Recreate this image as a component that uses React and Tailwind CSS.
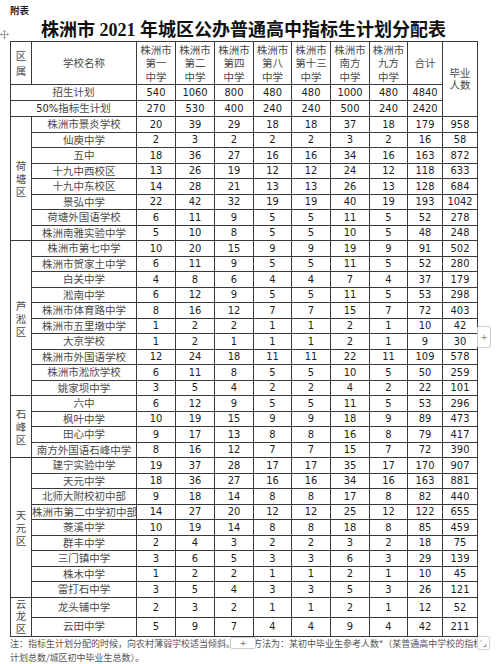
const cjk = '"Noto Sans CJK SC", sans-serif';
const num = '"DejaVu Sans Condensed", "DejaVu Sans", sans-serif';

const groups = [
  {
    name: ['荷', '塘', '区'],
    rows: [
      ['株洲市景炎学校', 20, 39, 29, 18, 18, 37, 18, 179, 958],
      ['仙庾中学', 2, 3, 2, 2, 2, 3, 2, 16, 58],
      ['五中', 18, 36, 27, 16, 16, 34, 16, 163, 872],
      ['十九中西校区', 13, 26, 19, 12, 12, 24, 12, 118, 633],
      ['十九中东校区', 14, 28, 21, 13, 13, 26, 13, 128, 684],
      ['景弘中学', 22, 42, 32, 19, 19, 40, 19, 193, 1042],
      ['荷塘外国语学校', 6, 11, 9, 5, 5, 11, 5, 52, 278],
      ['株洲南雅实验中学', 5, 10, 8, 5, 5, 10, 5, 48, 248],
    ],
  },
  {
    name: ['芦', '淞', '区'],
    rows: [
      ['株洲市第七中学', 10, 20, 15, 9, 9, 19, 9, 91, 502],
      ['株洲市贺家土中学', 6, 11, 9, 5, 5, 11, 5, 52, 280],
      ['白关中学', 4, 8, 6, 4, 4, 7, 4, 37, 179],
      ['淞南中学', 6, 12, 9, 5, 5, 11, 5, 53, 298],
      ['株洲市体育路中学', 8, 16, 12, 7, 7, 15, 7, 72, 403],
      ['株洲市五里墩中学', 1, 2, 2, 1, 1, 2, 1, 10, 42],
      ['大京学校', 1, 2, 1, 1, 1, 2, 1, 9, 30],
      ['株洲市外国语学校', 12, 24, 18, 11, 11, 22, 11, 109, 578],
      ['株洲市淞欣学校', 6, 11, 8, 5, 5, 10, 5, 50, 259],
      ['姚家坝中学', 3, 5, 4, 2, 2, 4, 2, 22, 101],
    ],
  },
  {
    name: ['石', '峰', '区'],
    rows: [
      ['六中', 6, 12, 9, 5, 5, 11, 5, 53, 296],
      ['枫叶中学', 10, 19, 15, 9, 9, 18, 9, 89, 473],
      ['田心中学', 9, 17, 13, 8, 8, 16, 8, 79, 417],
      ['南方外国语石峰中学', 8, 16, 12, 7, 7, 15, 7, 72, 390],
    ],
  },
  {
    name: ['天', '元', '区'],
    rows: [
      ['建宁实验中学', 19, 37, 28, 17, 17, 35, 17, 170, 907],
      ['天元中学', 18, 36, 27, 16, 16, 34, 16, 163, 881],
      ['北师大附校初中部', 9, 18, 14, 8, 8, 17, 8, 82, 440],
      ['株洲市第二中学初中部', 14, 27, 20, 12, 12, 25, 12, 122, 655],
      ['菱溪中学', 10, 19, 14, 8, 8, 18, 8, 85, 459],
      ['群丰中学', 2, 4, 3, 2, 2, 3, 2, 18, 75],
      ['三门镇中学', 3, 6, 5, 3, 3, 6, 3, 29, 139],
      ['株木中学', 1, 2, 2, 1, 1, 2, 1, 10, 45],
      ['雷打石中学', 3, 5, 4, 3, 3, 5, 3, 26, 121],
    ],
  },
  {
    name: ['云', '龙', '区'],
    tall: true,
    rows: [
      ['龙头铺中学', 2, 3, 2, 1, 1, 2, 1, 12, 52],
      ['云田中学', 5, 9, 7, 4, 4, 9, 4, 42, 211],
    ],
  },
];

const heads = [
  ['株洲市', '第一', '中学'],
  ['株洲市', '第二', '中学'],
  ['株洲市', '第四', '中学'],
  ['株洲市', '第八', '中学'],
  ['株洲市', '第十三', '中学'],
  ['株洲市', '南方', '中学'],
  ['株洲市', '九方', '中学'],
];

const cell = 'border border-[#3a3a3a] p-0 text-center align-middle';

function Num({ v }) {
  return (
    <td className={`${cell} text-[11px] font-stretch-condensed text-[#1c1c1c] leading-none`} style={{ fontFamily: num }}>
      {v}
    </td>
  );
}

function Stack({ chars, lead }) {
  return (
    <div className={`flex flex-col items-center ${lead} text-[10.5px] text-[#4a4a4a]`} style={{ fontFamily: cjk }}>
      {chars.map((c, i) => (
        <span key={i}>{c}</span>
      ))}
    </div>
  );
}

function MoveHandle() {
  return (
    <svg width="9" height="9" viewBox="0 0 9 9" className="absolute left-[0px] top-[30px]" fill="none" stroke="#888" strokeWidth="0.8">
      <path d="M4.5 0.5v8M0.5 4.5h8" />
      <path d="M3.2 1.8l1.3-1.3 1.3 1.3M3.2 7.2l1.3 1.3 1.3-1.3M1.8 3.2L0.5 4.5l1.3 1.3M7.2 3.2l1.3 1.3-1.3 1.3" />
    </svg>
  );
}

export default function App() {
  return (
    <div className="relative w-[499px] h-[664px] bg-white overflow-hidden">
      <MoveHandle />
      <div className="pl-[10px]">
        <div className="h-[16px] pt-[4px] text-[9.5px] font-bold leading-[12px] text-[#222]" style={{ fontFamily: cjk }}>
          附表
        </div>
        <div
          className="h-[25px] w-[467px] pt-[3px] text-center text-[18px] font-bold leading-[22px] text-[#111]"
          style={{ fontFamily: '"Liberation Serif", "Noto Sans CJK SC", serif' }}
        >
          株洲市 2021 年城区公办普通高中指标生计划分配表
        </div>

        <table className="w-[467px] table-fixed border-collapse">
          <colgroup>
            <col className="w-[21px]" />
            <col className="w-[105px]" />
            <col className="w-[39px]" />
            <col className="w-[39px]" />
            <col className="w-[39px]" />
            <col className="w-[38px]" />
            <col className="w-[39px]" />
            <col className="w-[39px]" />
            <col className="w-[38px]" />
            <col className="w-[35px]" />
            <col className="w-[35px]" />
          </colgroup>
          <tbody>
            <tr className="h-[43px]">
              <td className={cell}>
                <Stack chars={['区', '属']} lead="leading-[15px]" />
              </td>
              <td className={`${cell} text-[10.5px] text-[#4a4a4a]`} style={{ fontFamily: cjk }}>
                学校名称
              </td>
              {heads.map((h, i) => (
                <td key={i} className={cell}>
                  <Stack chars={h} lead="leading-[13.5px]" />
                </td>
              ))}
              <td className={`${cell} text-[10.5px] text-[#4a4a4a]`} style={{ fontFamily: cjk }}>
                合计
              </td>
              <td className={cell} rowSpan={3}>
                <Stack chars={['毕业', '人数']} lead="leading-[12px]" />
              </td>
            </tr>
            <tr className="h-[16px]">
              <td colSpan={2} className={`${cell} text-[10.5px] text-[#4a4a4a] leading-none`} style={{ fontFamily: cjk }}>
                招生计划
              </td>
              {[540, 1060, 800, 480, 480, 1000, 480, 4840].map((v, i) => (
                <Num key={i} v={v} />
              ))}
            </tr>
            <tr className="h-[16px]">
              <td colSpan={2} className={`${cell} text-[10.5px] text-[#4a4a4a] leading-none`} style={{ fontFamily: cjk }}>
                <span className="text-[11px] font-stretch-condensed text-[#2a2a2a]" style={{ fontFamily: num }}>50%</span>
                指标生计划
              </td>
              {[270, 530, 400, 240, 240, 500, 240, 2420].map((v, i) => (
                <Num key={i} v={v} />
              ))}
            </tr>
            {groups.map((g) =>
              g.rows.map((r, ri) => (
                <tr key={r[0]} className={g.tall ? (ri === 0 ? 'h-[20px]' : 'h-[19px]') : 'h-[15.5px]'}>
                  {ri === 0 && (
                    <td className={cell} rowSpan={g.rows.length}>
                      <Stack chars={g.name} lead={g.tall ? 'leading-[12.5px]' : 'leading-[13px]'} />
                    </td>
                  )}
                  <td className={`${cell} text-[10.5px] text-[#4a4a4a] leading-none whitespace-nowrap`} style={{ fontFamily: cjk }}>
                    {r[0]}
                  </td>
                  {r.slice(1).map((v, i) => (
                    <Num key={i} v={v} />
                  ))}
                </tr>
              ))
            )}
          </tbody>
        </table>

        <div className="relative w-[467px] overflow-hidden whitespace-nowrap text-[9px] leading-[14px] text-[#555]" style={{ fontFamily: cjk }}>
          <div>注：指标生计划分配的时候，向农村薄弱学校适当倾斜。计算方法为：某初中毕业生参考人数*（某普通高中学校的指标生</div>
          <div>计划总数/城区初中毕业生总数）。</div>
        </div>
      </div>

      <div className="absolute left-[230px] top-[637px] flex h-[12px] w-[26px] items-center justify-center rounded-[2px] border border-[#cfcfcf] bg-white text-[10px] leading-none text-[#777]">
        +
      </div>
      <div className="absolute left-[477px] top-[326px] flex h-[22px] w-[14px] items-center justify-center rounded-[2px] border border-[#cfcfcf] bg-white text-[10px] leading-none text-[#888]">
        +
      </div>
      <div className="absolute left-[477px] top-[636px] h-[14px] w-[13px] rounded-[2px] border border-[#d5d5d5] bg-white">
        <svg width="11" height="12" viewBox="0 0 11 12" fill="none" stroke="#777" strokeWidth="0.9">
          <path d="M3 3.5v1M8 7l0 2.5-2.5 0" />
        </svg>
      </div>
    </div>
  );
}
